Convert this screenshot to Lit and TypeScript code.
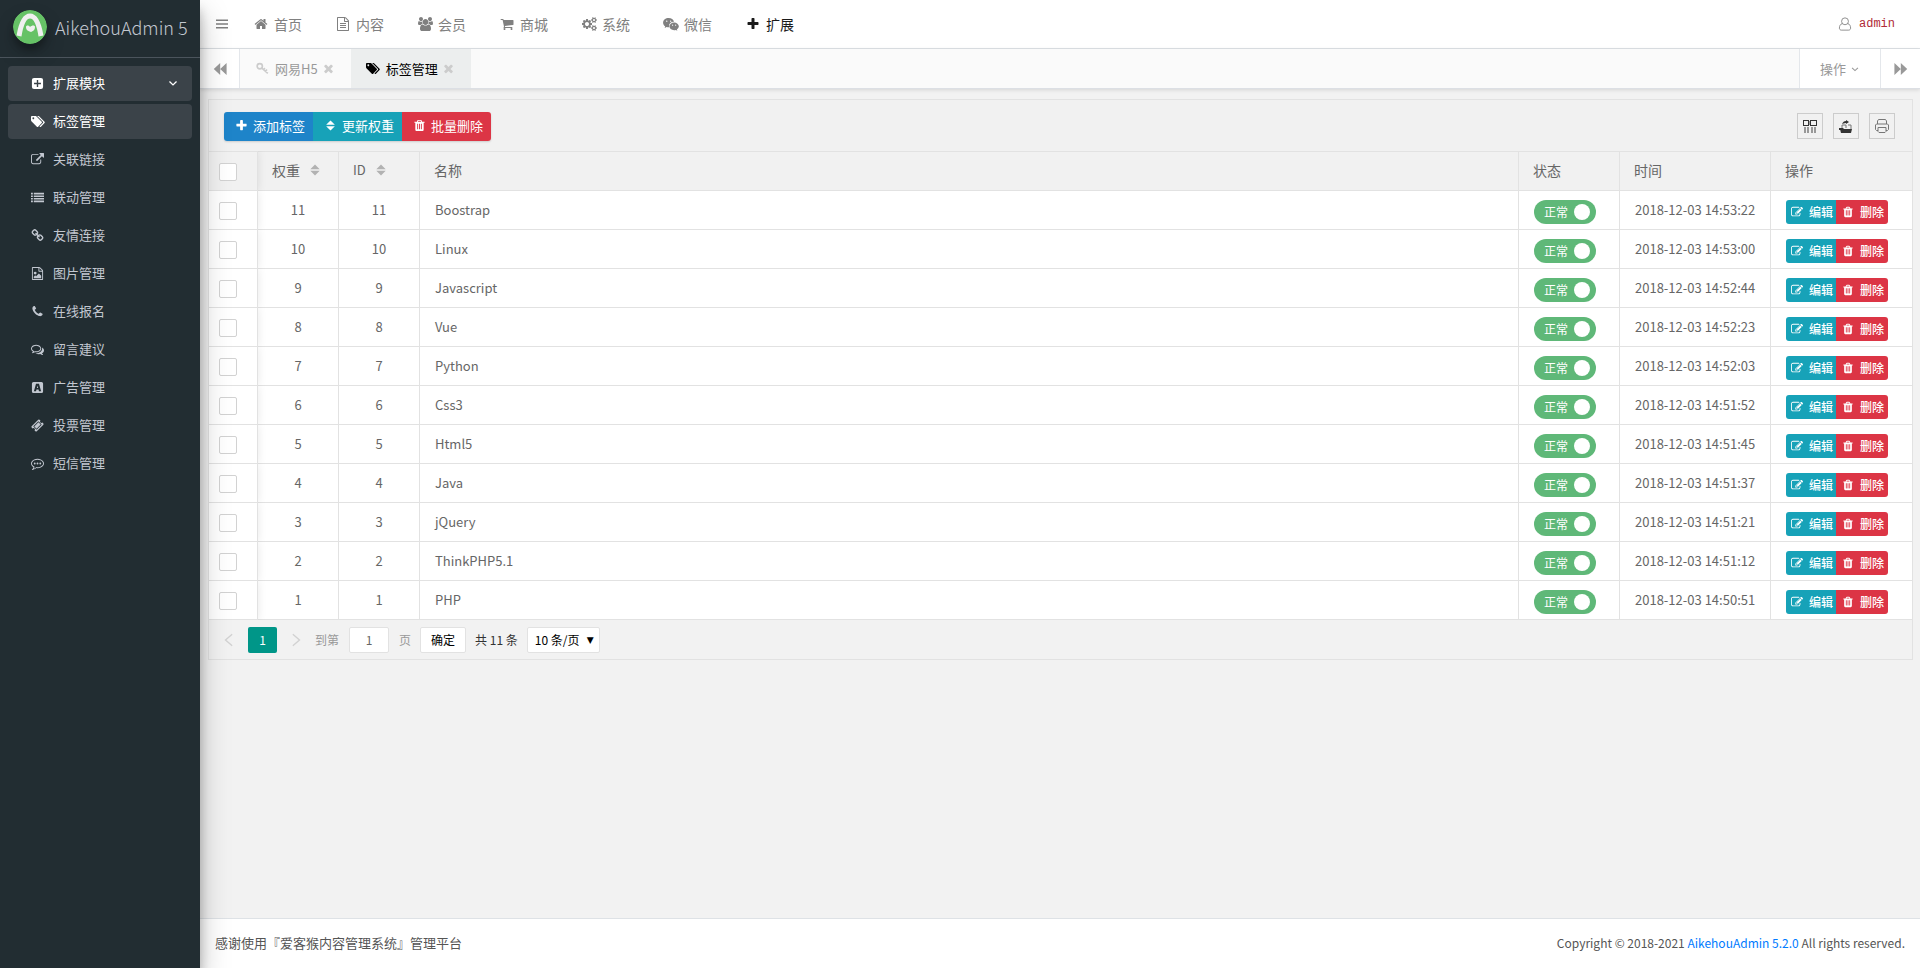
import { LitElement, html, css, svg, SVGTemplateResult } from "lit";
import { customElement, state } from "lit/decorators.js";
import { classMap } from "lit/directives/class-map.js";

interface Glyph {
  w?: number;
  body: SVGTemplateResult;
}

const GEAR =
  "v140q0 16-149 31-12 27-30 52 51 113 51 138 0 4-4 7-122 71-124 71-8 0-46-47t-52-68q-20 2-30 2t-30-2q-14 21-52 68t-46 47q-2 0-124-71-4-3-4-7 0-25 51-138-18-25-30-52-149-15-149-31v-140q0-16 149-31 13-29 30-52-51-113-51-138 0-4 4-7 4-2 35-20t59-34 30-16q8 0 46 46.500t52 67.500q20-2 30-2t30 2q51-71 92-112l6-2q4 0 124 70 4 3 4 7 0 25-51 138 17 23 30 52 149 15 149 31z";

const GLYPHS: Record<string, Glyph> = {
  bars: { body: svg`<path d="M128 320h1536v192H128zM128 800h1536v192H128zM128 1280h1536v192H128z"/>` },
  home: {
    body: svg`<path d="M1472 992v480q0 26-19 45t-45 19h-384v-384h-256v384h-384q-26 0-45-19t-19-45v-480q0-1 .5-3t.5-3l575-474 575 474q1 2 1 6zm223-69l-62 74q-8 9-21 11h-3q-13 0-21-7l-692-577-692 577q-12 8-24 7-13-2-21-11l-62-74q-8-10-7-23.500t11-21.500l719-599q32-26 76-26t76 26l244 204v-195q0-14 9-23t23-9h192q14 0 23 9t9 23v408l219 182q10 8 11 21.500t-7 23.500z"/>`,
  },
  file: {
    body: svg`<path d="M1596 380q28 28 48 76t20 88v1152q0 40-28 68t-68 28h-1344q-40 0-68-28t-28-68v-1600q0-40 28-68t68-28h896q40 0 88 20t76 48zm-444-244v376h376q-10-29-22-41l-313-313q-12-12-41-22zm384 1528v-1024h-416q-40 0-68-28t-28-68v-416h-768v1536h1280zm-1024-864q0-14 9-23t23-9h704q14 0 23 9t9 23v64q0 14-9 23t-23 9h-704q-14 0-23-9t-9-23v-64zm736 224q14 0 23 9t9 23v64q0 14-9 23t-23 9h-704q-14 0-23-9t-9-23v-64q0-14 9-23t23-9h704zm0 256q14 0 23 9t9 23v64q0 14-9 23t-23 9h-704q-14 0-23-9t-9-23v-64q0-14 9-23t23-9h704z"/>`,
  },
  image: {
    body: svg`<path d="M1596 380q28 28 48 76t20 88v1152q0 40-28 68t-68 28h-1344q-40 0-68-28t-28-68v-1600q0-40 28-68t68-28h896q40 0 88 20t76 48zm-444-244v376h376q-10-29-22-41l-313-313q-12-12-41-22zm384 1528v-1024h-416q-40 0-68-28t-28-68v-416h-768v1536h1280zm-128-448v320h-1024v-192l192-192 128 128 384-384zm-832-192q-80 0-136-56t-56-136 56-136 136-56 136 56 56 136-56 136-136 56z"/>`,
  },
  users: {
    w: 1920,
    body: svg`<path d="M593 896q-162 5-265 128h-134q-82 0-138-40.500t-56-118.500q0-353 124-353 6 0 43.500 21t97.500 42.500 119 21.500q67 0 133-23-5 37-5 66 0 139 81 256zm1071 637q0 120-73 189.500t-194 69.500h-874q-121 0-194-69.500t-73-189.500q0-53 3.500-103.500t14-109 26.500-108.500 43-97.500 62-81 85.500-53.500 111.500-20q10 0 43 21.500t73 48 107 48 135 21.500 135-21.500 107-48 73-48 43-21.500q61 0 111.500 20t85.500 53.500 62 81 43 97.500 26.500 108.500 14 109 3.500 103.500zm-1024-1277q0 106-75 181t-181 75-181-75-75-181 75-181 181-75 181 75 75 181zm704 384q0 159-112.500 271.500t-271.500 112.500-271.500-112.500-112.500-271.500 112.500-271.500 271.500-112.500 271.500 112.500 112.500 271.500zm576 225q0 78-56 118.500t-138 40.500h-134q-103-123-265-128 81-117 81-256 0-29-5-66 66 23 133 23 59 0 119-21.500t97.500-42.500 43.500-21q124 0 124 353zm-128-609q0 106-75 181t-181 75-181-75-75-181 75-181 181-75 181 75 75 181z"/>`,
  },
  cart: {
    body: svg`<path d="M704 1536q0 52-38 90t-90 38-90-38-38-90 38-90 90-38 90 38 38 90zm896 0q0 52-38 90t-90 38-90-38-38-90 38-90 90-38 90 38 38 90zm128-1088v512q0 24-16.500 42.500t-40.500 21.500l-1044 122q13 60 13 70 0 16-24 64h920q26 0 45 19t19 45-19 45-45 19h-1024q-26 0-45-19t-19-45q0-11 8-31.500t16-36 21.500-40 15.500-29.500l-177-823h-204q-26 0-45-19t-19-45 19-45 45-19h256q16 0 28.500 6.500t19.500 15.500 13 24.500 8 26 5.500 29.500 4.500 26h1201q26 0 45 19t19 45z"/>`,
  },
  cogs: {
    w: 1920,
    body: svg`<path d="M896 896q0-106-75-181t-181-75-181 75-75 181 75 181 181 75 181-75 75-181zM1280 805v185q0 10-7 19.500t-16 10.500l-155 24q-11 35-32 76 34 48 90 115 7 11 7 20 0 12-7 19-23 30-82.500 89.500t-78.500 59.500q-11 0-21-7l-115-90q-37 19-77 31-11 108-23 155-7 24-30 24h-186q-11 0-20-7.500t-10-17.500l-23-153q-34-10-75-31l-118 89q-7 7-20 7-11 0-21-8-144-133-144-160 0-9 7-19 10-14 41-53t47-61q-23-44-35-82l-152-24q-10-1-17-9.500t-7-19.500v-185q0-10 7-19.500t16-10.500l155-24q11-35 32-76-34-48-90-115-7-11-7-20 0-12 7-20 22-30 82-89t79-59q11 0 21 7l115 90q34-18 77-32 11-108 23-154 7-24 30-24h186q11 0 20 7.500t10 17.500l23 153q34 10 75 31l118-89q8-7 20-7 11 0 21 8 144 133 144 160 0 8-7 19-12 16-42 54t-45 60q23 48 34 82l152 23q10 2 17 10.500t7 19.500z"/>
      <path fill-rule="evenodd" d="M1664 1408q0-52-38-90t-90-38-90 38-38 90q0 53 37.500 90.500t90.500 37.500 90.500-37.500 37.500-90.500zM1920 1338${GEAR}"/>
      <path fill-rule="evenodd" d="M1664 384q0-52-38-90t-90-38-90 38-38 90q0 53 37.500 90.500t90.500 37.500 90.500-37.500 37.500-90.500zM1920 314${GEAR}"/>`,
  },
  wechat: {
    w: 2048,
    body: svg`<path fill-rule="evenodd" d="M725 130C330 130 10 395 10 730c0 190 105 350 270 465l-70 210 250-125c90 18 165 35 265 35l60-3a520 520 0 0 1-20-145c0-300 260-545 590-545l65 4C1355 325 1060 130 725 130zM480 440a90 90 0 1 1 0 180 90 90 0 0 1 0-180zM980 440a90 90 0 1 1 0 180 90 90 0 0 1 0-180zM1425 690c-350 0-610 230-610 500 0 275 260 500 610 500 70 0 145-18 215-35l195 105-55-178c142-106 250-245 250-392 0-270-280-500-605-500zM1228 975a72 72 0 1 1 0 144 72 72 0 0 1 0-144zM1622 975a72 72 0 1 1 0 144 72 72 0 0 1 0-144z"/>`,
  },
  plus: {
    body: svg`<path d="M1600 736v192q0 40-28 68t-68 28h-416v416q0 40-28 68t-68 28h-192q-40 0-68-28t-28-68v-416h-416q-40 0-68-28t-28-68v-192q0-40 28-68t68-28h416v-416q0-40 28-68t68-28h192q40 0 68 28t28 68v416h416q40 0 68 28t28 68z"/>`,
  },
  user: {
    body: svg`<path fill="none" stroke="currentColor" stroke-width="110" d="M560 840C300 900 180 1130 180 1420c0 150 100 260 240 260h952c140 0 240-110 240-260 0-290-120-520-380-580M896 110a440 440 0 1 1 0 880 440 440 0 0 1 0-880z"/>`,
  },
  backward: { body: svg`<path d="M920 130v1532L100 896zM1740 130v1532L920 896z"/>` },
  forward: { body: svg`<path d="M872 130v1532L1692 896zM52 130v1532L872 896z"/>` },
  key: {
    body: svg`<g fill="none" stroke="currentColor" stroke-width="230"><circle cx="520" cy="580" r="360"/><path d="M770 820l860 740M1300 1290l210-250M1040 1070l190-220"/></g>`,
  },
  times: {
    body: svg`<path d="M1490 1322q0 40-28 68l-136 136q-28 28-68 28t-68-28l-294-294-294 294q-28 28-68 28t-68-28l-136-136q-28-28-28-68t28-68l294-294-294-294q-28-28-28-68t28-68l136-136q28-28 68-28t68 28l294 294 294-294q28-28 68-28t68 28l136 136q28 28 28 68t-28 68l-294 294 294 294q28 28 28 68z"/>`,
  },
  tags: {
    w: 2048,
    body: svg`<path d="M576 448q0-53-37.500-90.500t-90.500-37.500-90.500 37.500-37.500 90.500 37.500 90.500 90.500 37.500 90.500-37.500 37.500-90.500zm1067 576q0 53-37 90l-491 492q-39 37-91 37-53 0-90-37l-715-716q-38-37-64.500-101t-26.500-117v-416q0-52 38-90t90-38h416q53 0 117 26.500t102 64.500l715 714q37 39 37 91zm384 0q0 53-37 90l-491 492q-39 37-91 37-36 0-59-14t-53-45l470-470q37-37 37-90 0-52-37-91l-715-714q-38-38-102-64.500t-117-26.500h224q53 0 117 26.500t102 64.500l715 714q37 39 37 91z"/>`,
  },
  plusSquare: {
    body: svg`<path fill-rule="evenodd" d="M416 128h960a288 288 0 0 1 288 288v960a288 288 0 0 1-288 288H416a288 288 0 0 1-288-288V416a288 288 0 0 1 288-288zM800 420v380H420v192h380v380h192V992h380V800H992V420z"/>`,
  },
  external: {
    body: svg`<path d="M1408 928v320q0 119-84.500 203.500t-203.500 84.500h-832q-119 0-203.500-84.500t-84.500-203.500v-832q0-119 84.500-203.500t203.500-84.500h704q14 0 23 9t9 23v64q0 14-9 23t-23 9h-704q-66 0-113 47t-47 113v832q0 66 47 113t113 47h832q66 0 113-47t47-113v-320q0-14 9-23t23-9h64q14 0 23 9t9 23zm384-864v512q0 26-19 45t-45 19-45-19l-176-176-652 652q-10 10-23 10t-23-10l-114-114q-10-10-10-23t10-23l652-652-176-176q-19-19-19-45t19-45 45-19h512q26 0 45 19t19 45z"/>`,
  },
  list: {
    body: svg`<path d="M0 256h256v224H0zM384 256h1408v224H384zM0 608h256v224H0zM384 608h1408v224H384zM0 960h256v224H0zM384 960h1408v224H384zM0 1312h256v224H0zM384 1312h1408v224H384z"/>`,
  },
  link: {
    body: svg`<path d="M1520 1216q0-40-28-68l-208-208q-28-28-68-28-42 0-72 32 3 3 19 18.500t21.500 21.500 15 19 13 25.500 3.500 27.500q0 40-28 68t-68 28q-15 0-27.500-3.500t-25.500-13-19-15-21.500-21.500-18.500-19q-33 31-33 73 0 40 28 68l206 207q27 27 68 27 40 0 68-26l147-146q28-28 28-67zm-703-705q0-40-28-68l-206-207q-28-28-68-28-39 0-68 27l-147 146q-28 28-28 67 0 40 28 68l208 208q27 27 68 27 42 0 72-31-3-3-19-18.500t-21.500-21.500-15-19-13-25.500-3.500-27.500q0-40 28-68t68-28q15 0 27.500 3.500t25.500 13 19 15 21.500 21.500 18.500 19q33-31 33-73zm895 705q0 120-85 203l-147 146q-83 83-203 83-121 0-204-85l-206-207q-83-83-83-203 0-123 88-209l-88-88q-86 88-208 88-120 0-204-84l-208-208q-84-84-84-204t85-203l147-146q83-83 203-83 121 0 204 85l206 207q83 83 83 203 0 123-88 209l88 88q86-88 208-88 120 0 204 84l208 208q84 84 84 204z"/>`,
  },
  phone: {
    body: svg`<path d="M1600 1240q0 27-10 70.500t-21 68.500q-21 50-122 106-94 51-186 51-27 0-53-3.500t-57.500-12.500-47-14.500-55.500-20.500-49-18q-98-35-175-83-127-79-264-216t-216-264q-48-77-83-175-3-9-18-49t-20.500-55.500-14.500-47-12.500-57.500-3.500-53q0-92 51-186 56-101 106-122 25-11 68.500-21t70.500-10q14 0 21 3 18 6 53 76 11 19 30 54t35 63.500 31 53.500q3 4 17.500 25t21.500 35.500 7 28.500q0 20-28.500 50t-62 55-62 53-28.500 46q0 9 5 22.500t8.500 20.500 14 24 11.500 19q76 137 174 235t235 174q2 1 19 11.500t24 14 20.500 8.500 22.500 5q18 0 46-28.500t53-62 55-62 50-28.500q14 0 28.500 7t35.500 21.500 25 17.500q25 15 53.500 31t63.500 35 54 30q70 35 76 53 3 7 3 21z"/>`,
  },
  comments: {
    body: svg`<path d="M704 384q-153 0-286 52t-211.500 141-78.500 191q0 82 53 158t149 132l97 56-35 84q34-20 62-39l44-31 53 10q78 14 153 14 153 0 286-52t211.500-141 78.500-191-78.500-191-211.500-141-286-52zm0-128q191 0 353.500 68.500t256.500 186.500 94 257-94 257-256.500 186.500-353.500 68.500q-86 0-176-16-124 88-278 128-36 9-86 16h-3q-11 0-20.500-8t-11.500-21q-1-3-1-6.500t.5-6.500 2-6l2.500-5 3.500-5.500 4-5 4.500-5 4-4.500q5-6 23-25t26-29.500 22.500-29 25-38.500 20.500-44q-124-72-195-177t-71-224q0-139 94-257t256.500-186.500 353.500-68.500zm822 1169q10 24 20.500 44t25 38.500 22.500 29 26 29.500 23 25q1 1 4 4.500t4.500 5 4 5 3.500 5.500l2.500 5 2 6 .5 6.500-1 6.500q-3 14-13 22t-22 7q-50-7-86-16-154-40-278-128-90 16-176 16-271 0-472-132 58 4 88 4 161 0 309-45t264-129q125-92 192-212t67-254q0-77-23-152 129 71 204 178t75 230q0 120-71 224.500t-195 176.500z"/>`,
  },
  commenting: {
    body: svg`<path d="M896 384q-204 0-381.500 69.500t-282 187.500-104.500 255q0 112 71.500 213.500t201.500 175.500l87 50-27 96q-24 91-70 172 152-63 275-171l43-38 57 6q69 8 130 8 204 0 381.500-69.500t282-187.500 104.500-255-104.500-255-282-187.500-381.500-69.500zm896 512q0 174-120 321.500t-326 233-450 85.500q-70 0-145-8-198 175-460 242-49 14-114 22h-5q-15 0-27-10.500t-16-27.500v-1q-3-4-.5-12t2-10 4.500-9.500l6-9 7-8.500 8-9q7-8 31-34.500t34.500-38 31-39.500 32.500-51 27-59 26-76q-157-89-247.500-220t-90.500-281q0-174 120-321.500t326-233 450-85.500 450 85.500 326 233 120 321.500z"/><circle cx="512" cy="896" r="128"/><circle cx="896" cy="896" r="128"/><circle cx="1280" cy="896" r="128"/>`,
  },
  adBadge: {
    body: svg`<path fill-rule="evenodd" d="M348 128h1096a220 220 0 0 1 220 220v1096a220 220 0 0 1-220 220H348a220 220 0 0 1-220-220V348a220 220 0 0 1 220-220zM690 380L400 1420h290l60-250h292l60 250h290L1102 380zM896 620l80 330H816z"/>`,
  },
  ticket: {
    body: svg`<path d="M1024 452l316 316-572 572-316-316zm-211 979l618-618q19-19 19-45t-19-45l-362-362q-18-18-45-18t-45 18l-618 618q-19 19-19 45t19 45l362 362q18 18 45 18t45-18zm889-637l-907 908q-37 37-90.500 37t-90.500-37l-126-126q56-56 56-136t-56-136-136-56-136 56l-125-126q-37-37-37-90.500t37-90.500l907-906q37-37 90.500-37t90.500 37l125 125q-56 56-56 136t56 136 136 56 136-56l126 125q37 37 37 90.500t-37 90.500z"/>`,
  },
  trash: {
    body: svg`<path fill-rule="evenodd" d="M704 1376v-704q0-14-9-23t-23-9h-64q-14 0-23 9t-9 23v704q0 14 9 23t23 9h64q14 0 23-9t9-23zm256 0v-704q0-14-9-23t-23-9h-64q-14 0-23 9t-9 23v704q0 14 9 23t23 9h64q14 0 23-9t9-23zm256 0v-704q0-14-9-23t-23-9h-64q-14 0-23 9t-9 23v704q0 14 9 23t23 9h64q14 0 23-9t9-23zM672 384h448l-48-117q-7-9-17-11H738q-10 2-17 11zM1600 416v64q0 14-9 23t-23 9h-96v948q0 83-47 143.500t-113 60.500H480q-66 0-113-58.500t-47-141.500V512h-96q-14 0-23-9t-9-23v-64q0-14 9-23t23-9h309l70-167q15-37 54-63t79-26h320q40 0 79 26t54 63l70 167h309q14 0 23 9t9 23z"/>`,
  },
  edit: {
    body: svg`<path d="M888 1184l116-116-152-152-116 116v56h96v96h56zm440-720q-16-16-33 1l-350 350q-17 17-1 33t33-1l350-350q17-17 1-33zm80 594v190q0 119-84.500 203.500t-203.500 84.500h-832q-119 0-203.500-84.500t-84.500-203.500v-832q0-119 84.500-203.500t203.500-84.500h832q63 0 117 25 15 7 18 23 3 17-9 29l-49 49q-14 14-32 8-23-6-45-6h-832q-66 0-113 47t-47 113v832q0 66 47 113t113 47h832q66 0 113-47t47-113v-126q0-13 9-22l64-64q15-15 35-7t20 29zm-96-738l288 288-672 672h-288v-288zm444 132l-92 92-288-288 92-92q28-28 68-28t68 28l152 152q28 28 28 68t-28 68z"/>`,
  },
  sort: { body: svg`<path d="M896 200l600 600H296zM896 1592L296 992h1200z"/>` },
  angleDown: { body: svg`<path fill="none" stroke="currentColor" stroke-width="200" d="M370 680l526 500 526-500"/>` },
  angleLeft: { body: svg`<path fill="none" stroke="currentColor" stroke-width="180" d="M1300 150L450 896l850 746"/>` },
  angleRight: { body: svg`<path fill="none" stroke="currentColor" stroke-width="180" d="M492 150l850 746-850 746"/>` },
  columns: {
    body: svg`<g transform="scale(128)"><path fill="#333" fill-rule="evenodd" d="M0 1h6v6H0zM1 2v4h4V2zM7 1h7v6H7zM8 2v4h5V2z"/><path fill="#999" d="M1 8h2v6H1zM4 8h2v6H4zM8 8h2v6H8zM11 8h2v6h-2zM6 2h1v4H6z"/></g>`,
  },
  share: {
    body: svg`<g transform="scale(128)"><path fill="#333" d="M1 10h12l-1 4H2zM0 9h4l1 1v1H0zM3 5c1-2 2-3 4-3V1l3 2-3 2V4C5 4 4 5 3 5z"/><path fill="none" stroke="#777" d="M3 9V6h4v3M9 6h3v4"/></g>`,
  },
  print: {
    body: svg`<g transform="scale(128)" fill="none" stroke="#777"><path d="M2.500 5V2l1-1.500h7l1 1.500v3M3 11.500H1.500l-1-1V6l1-1h11l1 1v4.500l-1 1H11M3 8.500h8v4l-1 1H4l-1-1z"/></g>`,
  },
};

const icon = (name: string, size = 14) => {
  const g = GLYPHS[name];
  const w = g.w ?? 1792;
  return html`<svg class="ico" aria-hidden="true" width=${Math.round((size * w) / 1792)} height=${size}
    viewBox="0 0 ${w} 1792" fill="currentColor">${g.body}</svg>`;
};

const TOP_MENU = [
  ["home", "首页"],
  ["file", "内容"],
  ["users", "会员"],
  ["cart", "商城"],
  ["cogs", "系统"],
  ["wechat", "微信"],
  ["plus", "扩展"],
];

const SIDE_MENU = [
  ["tags", "标签管理"],
  ["external", "关联链接"],
  ["list", "联动管理"],
  ["link", "友情连接"],
  ["image", "图片管理"],
  ["phone", "在线报名"],
  ["comments", "留言建议"],
  ["adBadge", "广告管理"],
  ["ticket", "投票管理"],
  ["commenting", "短信管理"],
];

interface Tag {
  id: number;
  name: string;
  time: string;
}

const TAGS: Tag[] = [
  { id: 11, name: "Boostrap", time: "2018-12-03 14:53:22" },
  { id: 10, name: "Linux", time: "2018-12-03 14:53:00" },
  { id: 9, name: "Javascript", time: "2018-12-03 14:52:44" },
  { id: 8, name: "Vue", time: "2018-12-03 14:52:23" },
  { id: 7, name: "Python", time: "2018-12-03 14:52:03" },
  { id: 6, name: "Css3", time: "2018-12-03 14:51:52" },
  { id: 5, name: "Html5", time: "2018-12-03 14:51:45" },
  { id: 4, name: "Java", time: "2018-12-03 14:51:37" },
  { id: 3, name: "jQuery", time: "2018-12-03 14:51:21" },
  { id: 2, name: "ThinkPHP5.1", time: "2018-12-03 14:51:12" },
  { id: 1, name: "PHP", time: "2018-12-03 14:50:51" },
];

const base = css`
  * {
    box-sizing: border-box;
  }
  a {
    color: inherit;
    text-decoration: none;
  }
  button,
  input,
  select {
    font: inherit;
    color: inherit;
    margin: 0;
    padding: 0;
    border: 0;
    background: none;
    border-radius: 0;
  }
  button {
    cursor: pointer;
  }
  .ico {
    display: block;
    flex: none;
  }
  .slot {
    display: flex;
    justify-content: center;
    flex: none;
    width: 18px;
  }
`;

@customElement("app-sidebar")
export class AppSidebar extends LitElement {
  static styles = [
    base,
    css`
      :host {
        display: flex;
        flex-direction: column;
        background: #222d32;
        color: #c2c7d0;
        box-shadow: 0 14px 28px rgba(0, 0, 0, 0.25), 0 10px 10px rgba(0, 0, 0, 0.22);
      }
      .brand {
        display: flex;
        align-items: center;
        gap: 8px;
        height: 58px;
        padding: 0 12px 3px 13px;
        border-bottom: 1px solid #4b545c;
        font-size: 18px;
        font-weight: 300;
        white-space: nowrap;
      }
      .logo {
        flex: none;
        width: 34px;
        height: 34px;
        border-radius: 50%;
        box-shadow: 0 10px 20px rgba(0, 0, 0, 0.19), 0 6px 6px rgba(0, 0, 0, 0.23);
      }
      nav {
        display: flex;
        flex-direction: column;
        gap: 3px;
        padding: 8px;
      }
      .item {
        display: flex;
        align-items: center;
        gap: 7px;
        width: 100%;
        height: 35px;
        padding: 0 13px 1px 20px;
        border-radius: 4px;
        font-size: 13px;
        text-align: left;
      }
      .item.on {
        background: #3b4349;
        color: #fff;
      }
      .label {
        flex: 1;
      }
    `,
  ];

  render() {
    return html`
      <a class="brand" href="#">
        <svg class="logo" viewBox="0 0 34 34" aria-hidden="true">
          <circle cx="17" cy="17" r="17" fill="#66c266" />
          <path d="M6 26C8 14 11 6 17 6s9 8 11 20" fill="none" stroke="#f0f0f0" stroke-width="5" />
          <path d="M18 22c-4-1-5-3-5-5s3-2 4 0c2-2 5-2 5 0s-1 4-4 5z" fill="#f0f0f0" />
        </svg>
        <span>AikehouAdmin 5</span>
      </a>
      <nav>
        <button class="item on" type="button">
          <span class="slot">${icon("plusSquare", 13)}</span><span class="label">扩展模块</span>${icon("angleDown", 12)}
        </button>
        ${SIDE_MENU.map(
          ([glyph, text], i) => html`<a class=${classMap({ item: true, on: i === 0 })} href="#">
            <span class="slot">${icon(glyph, 13)}</span><span class="label">${text}</span>
          </a>`
        )}
      </nav>
    `;
  }
}

@customElement("app-header")
export class AppHeader extends LitElement {
  static styles = [
    base,
    css`
      :host {
        display: block;
        background: #fff;
      }
      .top {
        display: flex;
        align-items: center;
        height: 49px;
        padding-bottom: 1px;
        border-bottom: 1px solid #dee2e6;
        color: #808080;
        font-size: 14px;
      }
      .toggle {
        display: flex;
        justify-content: center;
        width: 36px;
        margin-left: 4px;
      }
      .link {
        display: flex;
        align-items: center;
        gap: 4px;
        padding: 0 16px;
        white-space: nowrap;
      }
      .link.on {
        color: #1a1a1a;
      }
      .menu {
        display: flex;
        flex: 1;
        margin-left: -4px;
      }
      .account {
        display: flex;
        align-items: center;
        gap: 7px;
        padding: 0 25px;
      }
      .name {
        font: 12px/16px "Liberation Mono", monospace;
        color: #b02a37;
      }
      .tabs {
        display: flex;
        height: 40px;
        border-bottom: 1px solid #dcdfe4;
        background: #fafafa;
        color: #999;
        font-size: 13px;
        box-shadow: 0 1px 4px rgba(0, 0, 0, 0.12);
      }
      .arrow {
        display: flex;
        align-items: center;
        justify-content: center;
        width: 40px;
        background: #fff;
        border-left: 1px solid #e4e7eb;
      }
      .arrow.first {
        border-left: 0;
        border-right: 1px solid #e4e7eb;
      }
      .tab {
        display: flex;
        align-items: center;
        gap: 4px;
        padding: 0 16px 0 13px;
      }
      .tab.on {
        background: #eceeee;
        color: #000;
      }
      .close {
        color: #ccc;
      }
      .key {
        color: #ccc;
      }
      .actions {
        display: flex;
        align-items: center;
        justify-content: center;
        gap: 4px;
        width: 81px;
        margin-left: auto;
        background: #fff;
        border-left: 1px solid #e4e7eb;
      }
    `,
  ];

  render() {
    return html`
      <div class="top">
        <button class="toggle" type="button" aria-label="菜单">${icon("bars")}</button>
        <nav class="menu">
          ${TOP_MENU.map(
            ([glyph, text]) => html`<a class=${classMap({ link: true, on: text === "扩展" })} href="#">
              <span class="slot">${icon(glyph)}</span>${text}
            </a>`
          )}
        </nav>
        <a class="account" href="#">${icon("user")}<span class="name">admin</span></a>
      </div>
      <div class="tabs">
        <button class="arrow first" type="button" aria-label="向左">${icon("backward")}</button>
        <div class="tab">
          <span class="slot key">${icon("key", 13)}</span><span>网易H5</span>
          <button class="close" type="button" aria-label="关闭">${icon("times", 13)}</button>
        </div>
        <div class="tab on">
          <span class="slot">${icon("tags", 13)}</span><span>标签管理</span>
          <button class="close" type="button" aria-label="关闭">${icon("times", 13)}</button>
        </div>
        <button class="actions" type="button">操作 ${icon("angleDown", 10)}</button>
        <button class="arrow" type="button" aria-label="向右">${icon("forward")}</button>
      </div>
    `;
  }
}

@customElement("tag-table")
export class TagTable extends LitElement {
  @state() private picked = new Set<number>();

  static styles = [
    base,
    css`
      :host {
        display: block;
        border: 1px solid #e2e2e2;
        background: #f1f1f1;
        color: #666;
        font-size: 13px;
      }
      .bar {
        display: flex;
        align-items: center;
        justify-content: space-between;
        height: 51px;
        padding: 1px 17px 0 15px;
      }
      .group {
        display: flex;
        border-radius: 3px;
        overflow: hidden;
        box-shadow: 0 1px 2px rgba(0, 0, 0, 0.15);
      }
      .btn {
        display: flex;
        align-items: center;
        gap: 3px;
        height: 29px;
        padding: 0 8px 1px;
        color: #fff;
        white-space: nowrap;
      }
      .blue {
        background: #1e84c9;
      }
      .teal {
        background: #17a2b8;
      }
      .red {
        background: #dc3545;
      }
      .tools {
        display: flex;
        gap: 10px;
      }
      .tool {
        display: flex;
        align-items: center;
        justify-content: center;
        width: 26px;
        height: 26px;
        border: 1px solid #ccc;
      }
      table {
        width: 100%;
        border-collapse: separate;
        border-spacing: 0;
        table-layout: fixed;
      }
      .c-check {
        width: 49px;
      }
      .c-num {
        width: 81px;
      }
      .c-state {
        width: 101px;
      }
      .c-time {
        width: 151px;
      }
      .c-ops {
        width: 141px;
      }
      th,
      td {
        height: 39px;
        padding: 0 15px;
        border-right: 1px solid #e2e2e2;
        border-bottom: 1px solid #e2e2e2;
        text-align: left;
        font-weight: 400;
        white-space: nowrap;
      }
      th {
        border-top: 1px solid #e2e2e2;
        height: 40px;
        padding: 0 14px 2px;
        font-size: 14px;
      }
      th.latin {
        font-size: 13px;
      }
      tbody td {
        background: #fff;
      }
      th:last-child,
      td:last-child {
        border-right: 0;
      }
      td.num {
        text-align: center;
      }
      th.pick,
      td.pick {
        position: relative;
        padding: 2px 0 0 10px;
        box-shadow: 1px 0 8px rgba(0, 0, 0, 0.08);
        clip-path: inset(0 -10px 0 0);
      }
      .check {
        appearance: none;
        display: block;
        width: 18px;
        height: 18px;
        border: 1px solid #d2d2d2;
        border-radius: 2px;
        background: #fff;
      }
      .check:checked {
        background: #5fb878;
        border-color: #5fb878;
      }
      .sortable {
        display: flex;
        align-items: center;
        gap: 8px;
      }
      .sortable .ico {
        color: #b2b2b2;
      }
      td.ctl {
        padding-top: 4px;
      }
      .switch {
        display: flex;
        align-items: center;
        justify-content: space-between;
        width: 62px;
        height: 24px;
        padding: 0 6px 0 10px;
        border-radius: 12px;
        background: #5fb878;
        color: #fff;
        font-size: 12px;
      }
      .switch input {
        appearance: none;
        width: 16px;
        height: 16px;
        border-radius: 50%;
        background: #fff;
      }
      .ops {
        display: inline-flex;
        vertical-align: top;
        border-radius: 3px;
        overflow: hidden;
      }
      .mini {
        display: flex;
        align-items: center;
        gap: 4px;
        height: 24px;
        padding: 0 3px;
        color: #fff;
        font-size: 12px;
        font-weight: 500;
      }
      .mini.red {
        padding: 0 4px;
      }
      .mini .slot {
        width: 16px;
      }
      .pager {
        display: flex;
        align-items: center;
        gap: 9px;
        height: 39px;
        padding: 0 10px;
        background: #f2f2f2;
        font-size: 12px;
        color: #333;
      }
      .step {
        display: flex;
        justify-content: center;
        width: 20px;
        color: #d2d2d2;
      }
      .page {
        display: flex;
        align-items: center;
        justify-content: center;
        width: 29px;
        height: 26px;
        border-radius: 2px;
        background: #009688;
        color: #fff;
      }
      .jump {
        display: flex;
        align-items: center;
        gap: 10px;
        color: #999;
      }
      .box {
        height: 26px;
        border: 1px solid #e2e2e2;
        border-radius: 2px;
        background: #fff;
        color: #000;
      }
      .box.number {
        width: 40px;
        text-align: center;
        color: #666;
      }
      .box.ok {
        width: 46px;
      }
      .size {
        display: grid;
        align-items: center;
      }
      .size > * {
        grid-area: 1 / 1;
      }
      .size .box {
        appearance: none;
        width: 73px;
        padding: 0 7px;
      }
      .caret {
        justify-self: end;
        margin-right: 6px;
        font: 9px/12px "DejaVu Sans", sans-serif;
        color: #000;
        pointer-events: none;
      }
    `,
  ];

  private toggle(id: number) {
    const next = new Set(this.picked);
    next.has(id) ? next.delete(id) : next.add(id);
    this.picked = next;
  }

  private toggleAll(e: Event) {
    this.picked = (e.target as HTMLInputElement).checked ? new Set(TAGS.map((t) => t.id)) : new Set();
  }

  render() {
    return html`
      <div class="bar">
        <div class="group">
          <button class="btn blue" type="button"><span class="slot">${icon("plus", 13)}</span>添加标签</button>
          <button class="btn teal" type="button"><span class="slot">${icon("sort", 13)}</span>更新权重</button>
          <button class="btn red" type="button"><span class="slot">${icon("trash", 13)}</span>批量删除</button>
        </div>
        <div class="tools">
          <button class="tool" type="button" aria-label="筛选列">${icon("columns")}</button>
          <button class="tool" type="button" aria-label="导出">${icon("share")}</button>
          <button class="tool" type="button" aria-label="打印">${icon("print")}</button>
        </div>
      </div>
      <table>
        <colgroup>
          <col class="c-check" /><col class="c-num" /><col class="c-num" /><col />
          <col class="c-state" /><col class="c-time" /><col class="c-ops" />
        </colgroup>
        <thead>
          <tr>
            <th class="pick">
              <input class="check" type="checkbox" aria-label="全选"
                .checked=${this.picked.size === TAGS.length} @change=${this.toggleAll} />
            </th>
            <th><span class="sortable">权重 ${icon("sort")}</span></th>
            <th class="latin"><span class="sortable">ID ${icon("sort")}</span></th>
            <th>名称</th>
            <th>状态</th>
            <th>时间</th>
            <th>操作</th>
          </tr>
        </thead>
        <tbody>
          ${TAGS.map(
            (t) => html`<tr>
              <td class="pick">
                <input class="check" type="checkbox" aria-label=${t.name}
                  .checked=${this.picked.has(t.id)} @change=${() => this.toggle(t.id)} />
              </td>
              <td class="num">${t.id}</td>
              <td class="num">${t.id}</td>
              <td>${t.name}</td>
              <td class="ctl"><label class="switch">正常<input type="checkbox" checked /></label></td>
              <td>${t.time}</td>
              <td class="ctl">
                <div class="ops">
                  <button class="mini teal" type="button"><span class="slot">${icon("edit", 12)}</span>编辑</button>
                  <button class="mini red" type="button"><span class="slot">${icon("trash", 12)}</span>删除</button>
                </div>
              </td>
            </tr>`
          )}
        </tbody>
      </table>
      <div class="pager">
        <button class="step" type="button" aria-label="上一页">${icon("angleLeft")}</button>
        <span class="page">1</span>
        <button class="step" type="button" aria-label="下一页">${icon("angleRight")}</button>
        <label class="jump">到第<input class="box number" type="text" value="1" />页</label>
        <button class="box ok" type="button">确定</button>
        <span>共 11 条</span>
        <span class="size">
          <select class="box" aria-label="每页条数">
            <option>10 条/页</option>
            <option>20 条/页</option>
          </select>
          <span class="caret" aria-hidden="true">▼</span>
        </span>
      </div>
    `;
  }
}

@customElement("app-root")
export class AppRoot extends LitElement {
  static styles = [
    base,
    css`
      :host {
        display: grid;
        grid-template-columns: 200px minmax(0, 1fr);
        min-height: 100vh;
        background: #f2f2f2;
        font-family: "Noto Sans CJK SC", "Noto Sans", sans-serif;
        line-height: 20px;
      }
      app-sidebar {
        position: relative;
        z-index: 1;
      }
      .main {
        display: flex;
        flex-direction: column;
      }
      .content {
        flex: 1;
        padding: 10px 7px 10px 8px;
      }
      footer {
        display: flex;
        align-items: center;
        justify-content: space-between;
        height: 50px;
        padding: 0 15px 2px;
        border-top: 1px solid #dee2e6;
        background: #fff;
        color: #555;
        font-size: 13px;
      }
      .copy {
        font-size: 12px;
      }
      .copy a {
        color: #007bff;
      }
    `,
  ];

  render() {
    return html`
      <app-sidebar></app-sidebar>
      <div class="main">
        <app-header></app-header>
        <main class="content"><tag-table></tag-table></main>
        <footer>
          <span>感谢使用『爱客猴内容管理系统』管理平台</span>
          <span class="copy">Copyright © 2018-2021 <a href="#">AikehouAdmin 5.2.0</a> All rights reserved.</span>
        </footer>
      </div>
    `;
  }
}
